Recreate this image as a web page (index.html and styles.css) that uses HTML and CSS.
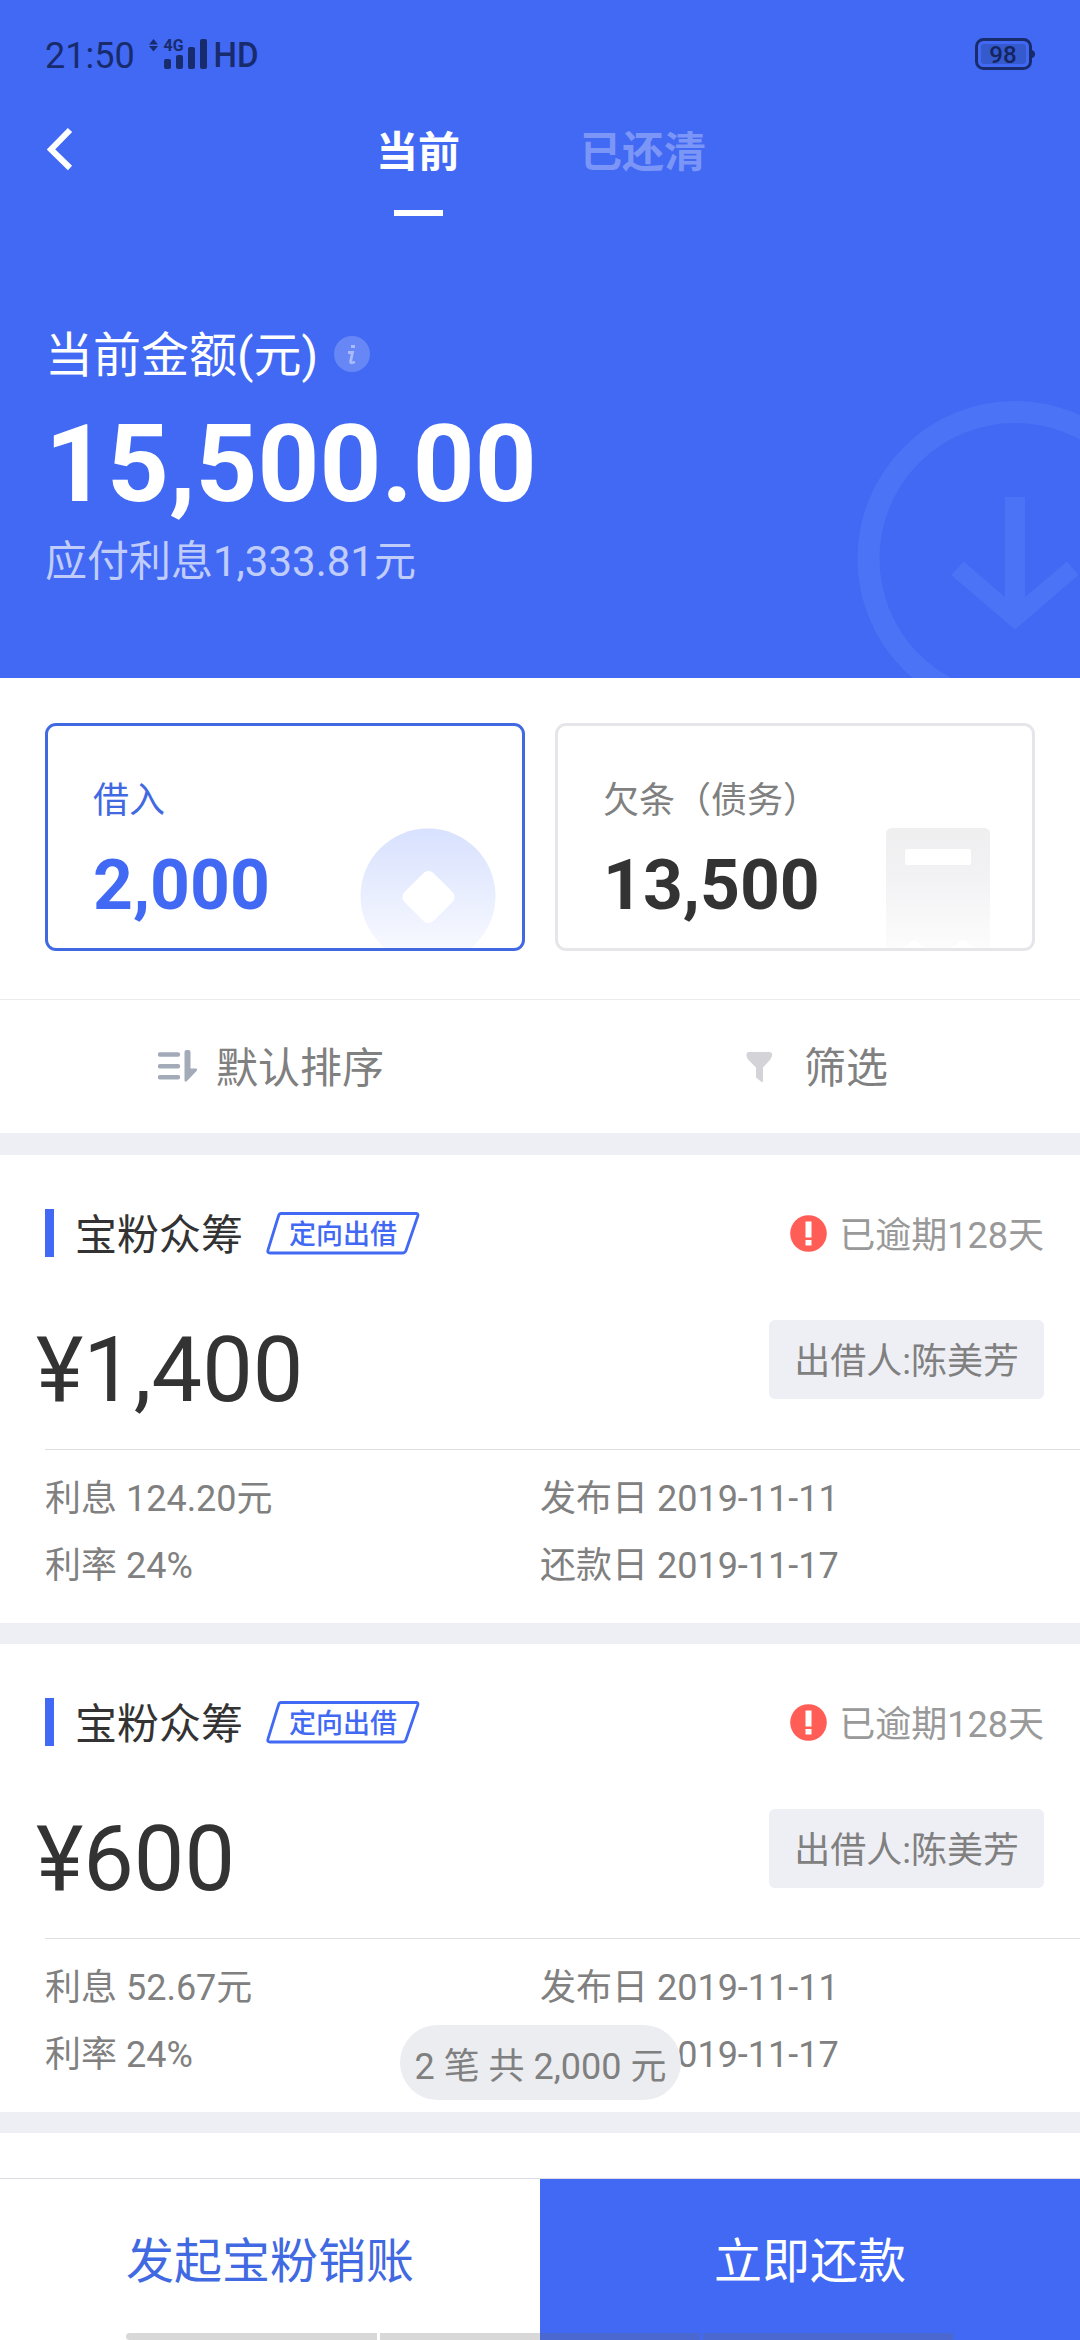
FILE: index.html
```html
<!DOCTYPE html>
<html lang="zh-CN">
<head>
<meta charset="utf-8">
<title>当前借款</title>
<link rel="stylesheet" href="styles.css">
</head>
<body>
<div class="screen">
  <header class="hero">
    <svg class="hero-mark" width="223" height="277" viewBox="857 401 223 277">
      <circle cx="1015" cy="558.5" r="146.5" fill="none" stroke="currentColor" stroke-width="22"/>
      <path fill="currentColor" d="M1005 497h20v100l42-35.500L1078.500 575 1015 629.500 951 575l12.500-13.500L1005 597z"/>
    </svg>
    <div class="status">
      <span class="clock">21:50</span>
      <svg class="signal" width="112" height="34" viewBox="148 37 112 34" fill="currentColor">
        <path d="M149 44.500l4.500-5.500 4.500 5.500zM149 46l4.500 5.500 4.500-5.500z"/>
        <text class="signal-net" x="163.500" y="51" textLength="20" lengthAdjust="spacingAndGlyphs">4G</text>
        <rect x="164" y="59" width="7" height="10" rx="2"/>
        <rect x="176" y="55" width="7" height="14" rx="2"/>
        <rect x="188" y="47" width="7" height="22" rx="2"/>
        <rect x="200" y="39" width="7" height="30" rx="2"/>
        <text class="signal-hd" x="213.500" y="67" textLength="45" lengthAdjust="spacingAndGlyphs">HD</text>
      </svg>
      <svg class="battery" width="62" height="34" viewBox="974 37 62 34">
        <rect x="976.500" y="39.500" width="54" height="29" rx="7" fill="none" stroke="currentColor" stroke-width="3"/>
        <rect x="981" y="44" width="45" height="20" rx="3" fill="#355acd"/>
        <path d="M1032 50q3 1 3 4t-3 4z" fill="currentColor"/>
        <text class="battery-text" x="1003" y="62.500" text-anchor="middle">98</text>
      </svg>
    </div>
    <nav class="nav">
      <svg class="back" width="26" height="44" viewBox="0 0 26 44" fill="none" stroke="#fff" stroke-width="6"><path d="M23 3L4 22.500 23 41"/></svg>
      <span class="tab tab-active">当前</span>
      <span class="tab">已还清</span>
    </nav>
    <section class="total">
      <div class="total-label">当前金额(元)
        <svg class="info" width="36" height="36" viewBox="0 0 36 36">
          <circle cx="18" cy="18" r="18" fill="#fff" fill-opacity=".2"/>
          <path d="M17 10.500h4M14 16.500h4.500l-2 9.500q0 1.500 4.500 0" fill="none" stroke="#a9bbfa" stroke-width="2.800"/>
        </svg>
      </div>
      <div class="total-amount">15,500.00</div>
      <div class="total-interest">应付利息1,333.81元</div>
    </section>
  </header>

  <main class="content">
    <section class="kinds">
      <div class="kind kind-active">
        <div class="kind-label">借入</div>
        <div class="kind-amount">2,000</div>
        <svg class="kind-art coin" width="136" height="120" viewBox="0 0 136 120">
          <defs><linearGradient id="coin" x1="0" y1="0" x2="0" y2="1"><stop offset="0" stop-color="#d8e1fe"/><stop offset="1" stop-color="#fbfcff"/></linearGradient></defs>
          <circle cx="68" cy="68" r="67.500" fill="url(#coin)"/>
          <rect x="48" y="48.500" width="41" height="41" rx="7" fill="#fff" transform="rotate(45 68.500 69)"/>
        </svg>
      </div>
      <div class="kind">
        <div class="kind-label">欠条（债务）</div>
        <div class="kind-amount">13,500</div>
        <svg class="kind-art receipt" width="104" height="120" viewBox="0 0 104 120">
          <defs><linearGradient id="receipt" x1="0" y1="0" x2="0" y2="1"><stop offset="0" stop-color="#efeff0"/><stop offset=".4" stop-color="#f2f2f4"/><stop offset="1" stop-color="#fcfcfc"/></linearGradient></defs>
          <path d="M0 120V6q0-6 6-6h92q6 0 6 6v114H92q-6 0-11-6-4-4-8 0-5 6-12 6H43q-6 0-11-6-4-4-8 0-5 6-12 6z" fill="url(#receipt)"/>
          <rect x="19" y="21" width="66" height="16" rx="2" fill="#fff"/>
        </svg>
      </div>
    </section>

    <section class="filters">
      <div class="filter filter-sort">
        <svg width="40" height="34" viewBox="0 0 40 34">
          <path d="M2 4.500h18M2 16.300h18M2 27.300h18" stroke="#a3abb9" stroke-width="4.400" stroke-linecap="round"/>
          <path d="M26.500 2q0-2 2-2h2q2 0 2 2v16.500H38q2 .5.500 2.500L29 31q-2.500 2-2.500-1z" fill="#a3abb9"/>
        </svg>
        <span>默认排序</span>
      </div>
      <div class="filter filter-pick">
        <svg width="27" height="32" viewBox="0 0 27 32"><path d="M3 1h20q4 0 3 4-1 3-3 5l-6 6.500V30q0 2-2 .5L10 26.500V16.500L3.500 10Q1 7.500.5 5 0 1 3 1z" fill="#d3d3d8"/></svg>
        <span>筛选</span>
      </div>
    </section>

    <article class="loan">
      <div class="loan-head">
        <span class="loan-title">宝粉众筹</span>
        <span class="badge">
          <svg class="badge-frame" width="154" height="43" viewBox="0 0 154 43"><path d="M15 1.500h135q2.500 0 1.800 2.500L140 38.500q-1 2.500-3.500 2.500H4q-3 0-2-3L12.500 4q.7-2.500 2.500-2.500z" fill="none" stroke="#4169f4" stroke-width="2.800"/></svg>
          <span class="badge-text">定向出借</span>
        </span>
        <svg class="alert" width="37" height="37" viewBox="0 0 37 37"><circle cx="18.500" cy="18.500" r="18.300" fill="#ff5d55"/><path d="M15.500 6.500h6v16h-6zM15.500 25h6v5.500h-6z" fill="#fff"/></svg>
        <span class="overdue">已逾期128天</span>
      </div>
      <div class="loan-body">
        <span class="loan-amount">¥1,400</span>
        <span class="lender">出借人:陈美芳</span>
      </div>
      <div class="loan-meta">
        <span>利息 124.20元</span><span>发布日 2019-11-11</span>
        <span>利率 24%</span><span>还款日 2019-11-17</span>
      </div>
    </article>

    <article class="loan">
      <div class="loan-head">
        <span class="loan-title">宝粉众筹</span>
        <span class="badge">
          <svg class="badge-frame" width="154" height="43" viewBox="0 0 154 43"><path d="M15 1.500h135q2.500 0 1.800 2.500L140 38.500q-1 2.500-3.500 2.500H4q-3 0-2-3L12.500 4q.7-2.500 2.500-2.500z" fill="none" stroke="#4169f4" stroke-width="2.800"/></svg>
          <span class="badge-text">定向出借</span>
        </span>
        <svg class="alert" width="37" height="37" viewBox="0 0 37 37"><circle cx="18.500" cy="18.500" r="18.300" fill="#ff5d55"/><path d="M15.500 6.500h6v16h-6zM15.500 25h6v5.500h-6z" fill="#fff"/></svg>
        <span class="overdue">已逾期128天</span>
      </div>
      <div class="loan-body">
        <span class="loan-amount">¥600</span>
        <span class="lender">出借人:陈美芳</span>
      </div>
      <div class="loan-meta">
        <span>利息 52.67元</span><span>发布日 2019-11-11</span>
        <span>利率 24%</span><span>还款日 2019-11-17</span>
      </div>
    </article>
  </main>

  <div class="summary">2 笔 共 2,000 元</div>

  <footer class="actions">
    <div class="action">发起宝粉销账</div>
    <div class="action action-primary">立即还款</div>
  </footer>

  <div class="gesture"><i></i><i></i><i></i></div>
</div>
</body>
</html>
```
FILE: styles.css
```css
* { box-sizing: border-box; }

body {
  margin: 0;
  background: #fff;
  font-family: Roboto, "Noto Sans CJK SC", sans-serif;
  font-size: 36px;
  color: #808080;
}

svg { display: block; flex: none; }

.screen {
  position: relative;
  display: flex;
  flex-direction: column;
  width: 1080px;
  height: 2340px;
  overflow: hidden;
}

/* Header */
.hero {
  position: relative;
  flex: none;
  height: 678px;
  background: #4169f4;
  color: #fff;
}

.hero-mark {
  position: absolute;
  right: 0;
  bottom: 0;
  color: #4a73f5;
}

.status {
  display: flex;
  align-items: center;
  height: 112px;
  padding: 0 44px 0 45px;
  line-height: 112px;
  color: #182b6c;
}

.clock { width: 103px; }
.signal { margin-bottom: 4px; overflow: visible; }
.signal-net { font-size: 16px; font-weight: 700; }
.signal-hd { font-size: 35px; font-weight: 500; }
.battery { margin: 0 0 4px auto; }
.battery-text { font-size: 24px; font-weight: 500; fill: #14245e; }

.nav {
  display: flex;
  height: 104px;
  padding-left: 47px;
}

.back { margin-top: 15px; margin-right: 303px; }

.tab {
  height: 104px;
  margin-right: 120px;
  font-size: 42px;
  font-weight: 700;
  line-height: 82px;
  color: #7b96f7;
  white-space: nowrap;
}

.tab-active { color: #fff; }

.tab-active::after {
  content: "";
  display: block;
  width: 49px;
  height: 6px;
  margin: 16px auto 0;
  background: #fff;
}

.total { padding: 108px 0 0 45px; }

.total-label {
  display: flex;
  align-items: center;
  gap: 16px;
  font-size: 48px;
  line-height: 64px;
}

.info { margin-bottom: 4px; }

.total-amount {
  margin-top: 6px;
  font-size: 108px;
  font-weight: 700;
  line-height: 140px;
}

.total-interest {
  font-size: 42px;
  line-height: 56px;
  color: #c0cdfb;
}

/* Content */
.content { flex: 1; min-height: 0; overflow: hidden; }

.kinds {
  display: flex;
  gap: 30px;
  height: 322px;
  padding: 45px 45px 0;
  border-bottom: 1px solid #ebebed;
}

.kind {
  position: relative;
  flex: 1;
  height: 228px;
  padding: 50px 0 0 45px;
  border: 3px solid #e6e6ea;
  border-radius: 11px;
  overflow: hidden;
}

.kind-label { line-height: 50px; }

.kind-amount {
  margin-top: 23px;
  font-size: 69.6px;
  font-weight: 700;
  line-height: 72px;
  color: #333;
}

.kind-active { border-color: #4169e2; }
.kind-active .kind-label { color: #4169e2; }
.kind-active .kind-amount { color: #4169f4; }

.kind-art { position: absolute; bottom: 0; }
.coin { right: 26px; }
.receipt { right: 42px; }

.filters {
  display: flex;
  height: 133px;
  font-size: 42px;
}

.filter {
  display: flex;
  align-items: center;
  width: 50%;
  line-height: 50px;
}

.filter span { padding-top: 4px; }
.filter-sort { gap: 18px; padding-left: 158px; }
.filter-pick { gap: 31px; padding-left: 206px; }

.loan {
  height: 489px;
  border-top: 21px solid #eeeff4;
}

.filters + .loan { height: 490px; border-top-width: 22px; }
.loan:last-child { height: 510px; border-bottom: 21px solid #eeeff4; }

.loan-head {
  display: flex;
  align-items: center;
  height: 156px;
  padding: 0 36px 0 45px;
}

.loan-title {
  display: flex;
  align-items: center;
  font-size: 42px;
  line-height: 48px;
  padding-left: 21px;
  border-left: 9px solid #4169f4;
  height: 48px;
  padding-top: 5px;
  color: #333;
}

.badge {
  display: grid;
  place-items: center;
  width: 154px;
  height: 43px;
  margin-left: 23px;
}

.badge > * { grid-area: 1 / 1; }

.badge-text {
  padding-top: 3px;
  font-size: 27px;
  font-weight: 500;
  line-height: 40px;
  color: #4169f4;
}

.alert { margin-left: auto; }

.overdue {
  margin-left: 12px;
  padding-top: 5px;
  line-height: 50px;
  color: #999;
}

.loan-body {
  display: flex;
  align-items: flex-start;
  justify-content: space-between;
  height: 138px;
  padding: 0 36px;
}

.loan-amount {
  font-size: 90px;
  line-height: 120px;
  color: #333;
}

.lender {
  height: 79px;
  margin-top: 9px;
  padding: 3px 25px 0;
  border-radius: 6px;
  background: #eeeff4;
  line-height: 79px;
}

.loan-meta {
  display: grid;
  grid-template-columns: 495px 1fr;
  margin-left: 45px;
  padding-top: 16px;
  border-top: 1px solid #dedede;
  line-height: 67px;
}

.summary {
  position: absolute;
  left: 400px;
  top: 2025px;
  width: 281px;
  height: 75px;
  padding-top: 5px;
  border-radius: 38px;
  background: #ecedf1;
  line-height: 75px;
  text-align: center;
  white-space: nowrap;
}

/* Footer */
.actions {
  display: flex;
  flex: none;
  height: 162px;
  border-top: 1px solid #dcdde2;
  font-size: 48px;
}

.action {
  flex: 1;
  padding-top: 2px;
  line-height: 161px;
  text-align: center;
  color: #4169e2;
}

.action-primary { background: #4169f4; color: #fff; }

.gesture {
  position: absolute;
  left: 126px;
  bottom: 0;
  display: grid;
  grid-template-columns: 251px 320px 251px;
  gap: 3px;
  height: 7px;
}

.gesture i { background: rgba(105, 105, 105, .26); }
.gesture i:first-child { border-radius: 4px 0 0 4px; }
.gesture i:last-child { border-radius: 0 4px 4px 0; }
```
